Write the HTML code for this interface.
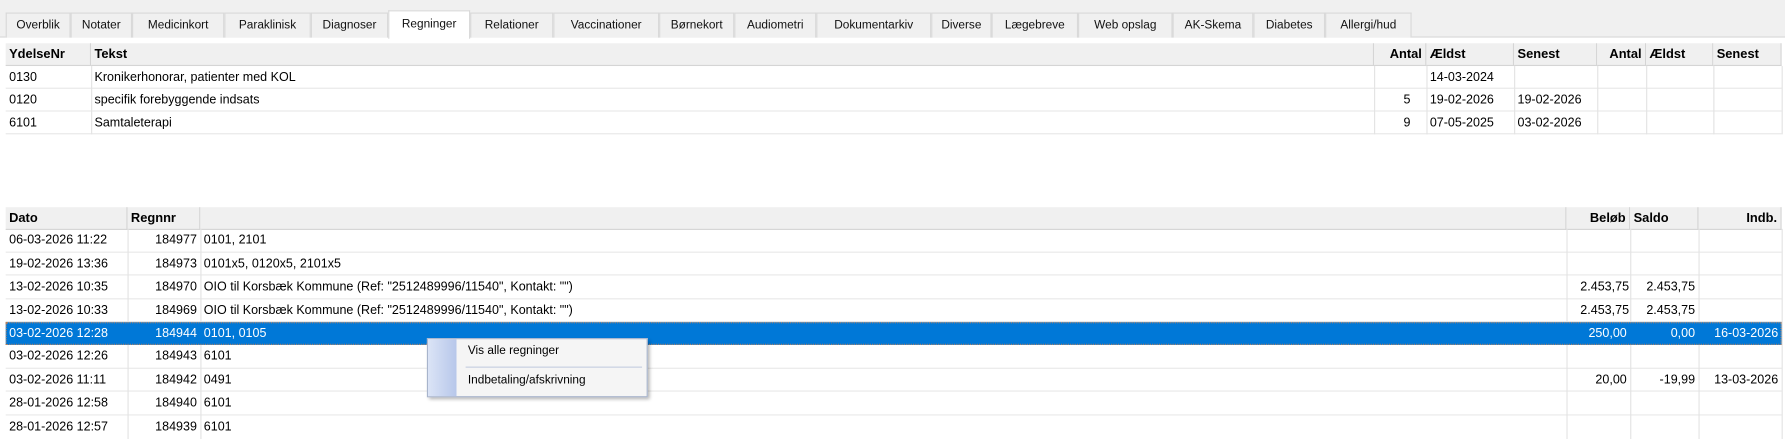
<!DOCTYPE html>
<html><head><meta charset="utf-8"><style>
*{margin:0;padding:0;box-sizing:border-box}
body{width:1785px;height:436px;background:#fff;position:relative;overflow:hidden;font-family:"Liberation Sans",Arial,sans-serif;color:#000}
#wrap{position:absolute;left:0;top:0;width:1568px;height:383px;transform:scale(1.1384);transform-origin:0 0;font-size:11px}
.topbar{position:absolute;left:0;top:0;width:1568px;height:33px;background:#f0f0f0;border-bottom:1px solid #d9d9d9}
.tab{position:absolute;top:11px;height:22px;line-height:21px;font-size:10.4px;text-align:center;border:1px solid #d9d9d9;border-bottom:none;background:#f0f0f0;color:#111}
.tab.act{background:#fff;top:9px;height:25px;line-height:24px}
.c{position:absolute;white-space:nowrap;overflow:hidden;height:20px;line-height:20px;padding:0 3px}
.h{font-weight:bold;font-size:11.3px;background:#f0f0f0;border-right:1px solid #d5d5d5;border-bottom:1px solid #d5d5d5}
.r{text-align:right}
.row{position:absolute;left:5px;width:1560px;border-bottom:1px solid #e8e8e8}
.vl{position:absolute;width:1px;background:#e3e3e3}
.sel{position:absolute;left:5px;top:283px;width:1560px;height:20px;background:#0078d7;border:1px dotted #b08060}
.w{color:#fff}
.menu{position:absolute;left:375px;top:297px;width:194px;height:52px;background:#f5f5f5;border:1px solid #a8b4cc;box-shadow:2px 2px 3px rgba(0,0,0,.3)}
.strip{position:absolute;left:0;top:0;width:25px;height:50px;background:linear-gradient(90deg,#dbe4f6,#b7c7ea)}
.mi{position:absolute;left:35px;font-size:10.4px}
</style></head><body><div id="wrap">
<div class="topbar"></div>
<div class="tab" style="left:5px;width:57px">Overblik</div>
<div class="tab" style="left:62px;width:54px">Notater</div>
<div class="tab" style="left:116px;width:81px">Medicinkort</div>
<div class="tab" style="left:197px;width:76px">Paraklinisk</div>
<div class="tab" style="left:273px;width:68px">Diagnoser</div>
<div class="tab act" style="left:341px;width:72px">Regninger</div>
<div class="tab" style="left:413px;width:73px">Relationer</div>
<div class="tab" style="left:486px;width:93px">Vaccinationer</div>
<div class="tab" style="left:579px;width:66px">Børnekort</div>
<div class="tab" style="left:645px;width:72px">Audiometri</div>
<div class="tab" style="left:717px;width:101px">Dokumentarkiv</div>
<div class="tab" style="left:818px;width:53px">Diverse</div>
<div class="tab" style="left:871px;width:76px">Lægebreve</div>
<div class="tab" style="left:947px;width:83px">Web opslag</div>
<div class="tab" style="left:1030px;width:71px">AK-Skema</div>
<div class="tab" style="left:1101px;width:63px">Diabetes</div>
<div class="tab" style="left:1164px;width:76px">Allergi/hud</div>

<div class="c h" style="left:5px;top:38px;width:75px">YdelseNr</div>
<div class="c h" style="left:80px;top:38px;width:1127px">Tekst</div>
<div class="c h r" style="left:1207px;top:38px;width:46px">Antal</div>
<div class="c h" style="left:1253px;top:38px;width:77px">Ældst</div>
<div class="c h" style="left:1330px;top:38px;width:73px">Senest</div>
<div class="c h r" style="left:1403px;top:38px;width:43px">Antal</div>
<div class="c h" style="left:1446px;top:38px;width:59px">Ældst</div>
<div class="c h" style="left:1505px;top:38px;width:60px">Senest</div>
<div class="row" style="top:58px;height:20px"></div>
<div class="row" style="top:78px;height:20px"></div>
<div class="row" style="top:98px;height:20px"></div>
<div class="vl" style="left:80px;top:58px;height:60px"></div>
<div class="vl" style="left:1207px;top:58px;height:60px"></div>
<div class="vl" style="left:1253px;top:58px;height:60px"></div>
<div class="vl" style="left:1330px;top:58px;height:60px"></div>
<div class="vl" style="left:1403px;top:58px;height:60px"></div>
<div class="vl" style="left:1446px;top:58px;height:60px"></div>
<div class="vl" style="left:1505px;top:58px;height:60px"></div>
<div class="vl" style="left:1565px;top:58px;height:60px"></div>
<div class="c" style="left:5px;top:58px">0130</div><div class="c" style="left:80px;top:58px">Kronikerhonorar, patienter med KOL</div><div class="c" style="left:1253px;top:58px">14-03-2024</div>
<div class="c" style="left:5px;top:78px">0120</div><div class="c" style="left:80px;top:78px">specifik forebyggende indsats</div><div class="c r" style="left:1207px;top:78px;width:46px;padding-right:14px">5</div><div class="c" style="left:1253px;top:78px">19-02-2026</div><div class="c" style="left:1330px;top:78px">19-02-2026</div>
<div class="c" style="left:5px;top:98px">6101</div><div class="c" style="left:80px;top:98px">Samtaleterapi</div><div class="c r" style="left:1207px;top:98px;width:46px;padding-right:14px">9</div><div class="c" style="left:1253px;top:98px">07-05-2025</div><div class="c" style="left:1330px;top:98px">03-02-2026</div>

<div class="c h" style="left:5px;top:182px;width:107px">Dato</div>
<div class="c h" style="left:112px;top:182px;width:64px">Regnnr</div>
<div class="c h" style="left:176px;top:182px;width:1200px"></div>
<div class="c h r" style="left:1376px;top:182px;width:56px">Beløb</div>
<div class="c h" style="left:1432px;top:182px;width:60px">Saldo</div>
<div class="c h r" style="left:1492px;top:182px;width:73px">Indb.</div>
<div class="row" style="top:201px;height:21px"></div>
<div class="row" style="top:222px;height:20px"></div>
<div class="row" style="top:242px;height:21px"></div>
<div class="row" style="top:263px;height:20px"></div>
<div class="row" style="top:303px;height:21px"></div>
<div class="row" style="top:324px;height:20px"></div>
<div class="row" style="top:344px;height:21px"></div>
<div class="row" style="top:365px;height:21px;border:none"></div>
<div class="vl" style="left:112px;top:201px;height:185px"></div>
<div class="vl" style="left:176px;top:201px;height:185px"></div>
<div class="vl" style="left:1376px;top:201px;height:185px"></div>
<div class="vl" style="left:1432px;top:201px;height:185px"></div>
<div class="vl" style="left:1492px;top:201px;height:185px"></div>
<div class="vl" style="left:1565px;top:201px;height:185px"></div>
<div class="sel"></div>

<div class="c" style="left:5px;top:201px">06-03-2026 11:22</div><div class="c r" style="left:112px;top:201px;width:64px">184977</div><div class="c" style="left:176px;top:201px">0101, 2101</div>
<div class="c" style="left:5px;top:222px">19-02-2026 13:36</div><div class="c r" style="left:112px;top:222px;width:64px">184973</div><div class="c" style="left:176px;top:222px">0101x5, 0120x5, 2101x5</div>
<div class="c" style="left:5px;top:242px">13-02-2026 10:35</div><div class="c r" style="left:112px;top:242px;width:64px">184970</div><div class="c" style="left:176px;top:242px">OIO til Korsbæk Kommune (Ref: "2512489996/11540", Kontakt: "")</div><div class="c r" style="left:1376px;top:242px;width:56px;padding:0 1px">2.453,75</div><div class="c r" style="left:1432px;top:242px;width:60px;padding:0 3px">2.453,75</div>
<div class="c" style="left:5px;top:263px">13-02-2026 10:33</div><div class="c r" style="left:112px;top:263px;width:64px">184969</div><div class="c" style="left:176px;top:263px">OIO til Korsbæk Kommune (Ref: "2512489996/11540", Kontakt: "")</div><div class="c r" style="left:1376px;top:263px;width:56px;padding:0 1px">2.453,75</div><div class="c r" style="left:1432px;top:263px;width:60px;padding:0 3px">2.453,75</div>
<div class="c w" style="left:5px;top:283px">03-02-2026 12:28</div><div class="c r w" style="left:112px;top:283px;width:64px">184944</div><div class="c w" style="left:176px;top:283px">0101, 0105</div><div class="c r w" style="left:1376px;top:283px;width:56px">250,00</div><div class="c r w" style="left:1432px;top:283px;width:60px">0,00</div><div class="c r w" style="left:1492px;top:283px;width:73px">16-03-2026</div>
<div class="c" style="left:5px;top:303px">03-02-2026 12:26</div><div class="c r" style="left:112px;top:303px;width:64px">184943</div><div class="c" style="left:176px;top:303px">6101</div>
<div class="c" style="left:5px;top:324px">03-02-2026 11:11</div><div class="c r" style="left:112px;top:324px;width:64px">184942</div><div class="c" style="left:176px;top:324px">0491</div><div class="c r" style="left:1376px;top:324px;width:56px">20,00</div><div class="c r" style="left:1432px;top:324px;width:60px">-19,99</div><div class="c r" style="left:1492px;top:324px;width:73px">13-03-2026</div>
<div class="c" style="left:5px;top:344px">28-01-2026 12:58</div><div class="c r" style="left:112px;top:344px;width:64px">184940</div><div class="c" style="left:176px;top:344px">6101</div>
<div class="c" style="left:5px;top:365px">28-01-2026 12:57</div><div class="c r" style="left:112px;top:365px;width:64px">184939</div><div class="c" style="left:176px;top:365px">6101</div>

<div class="menu"><div class="strip"></div>
<div class="mi" style="top:5px">Vis alle regninger</div>
<div style="position:absolute;left:33px;top:24px;width:155px;height:1px;background:#c5cde0"></div>
<div class="mi" style="top:31px">Indbetaling/afskrivning</div>
</div>
</div></body></html>
